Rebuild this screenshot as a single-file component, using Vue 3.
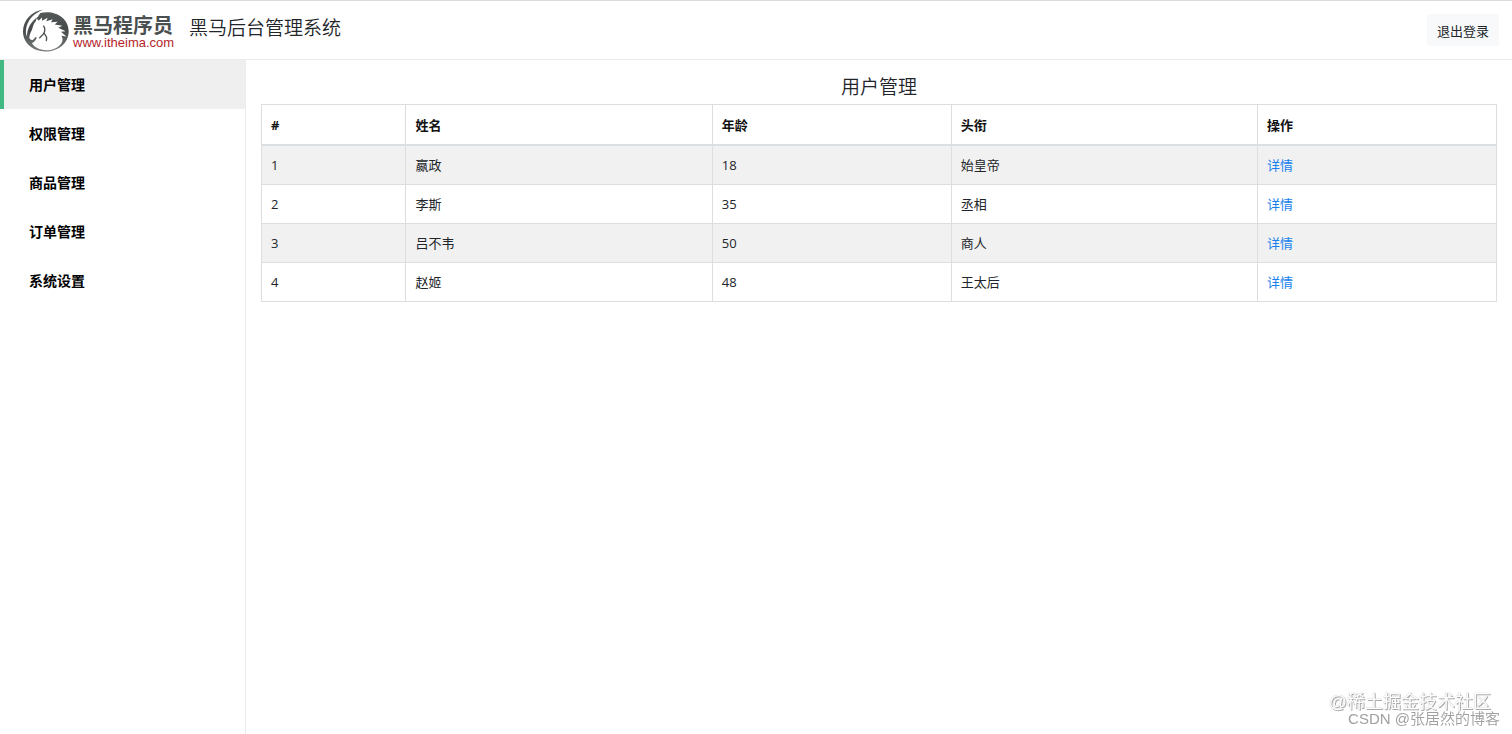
<template>
  <div class="layout">
    <header class="header">
      <a class="logo" href="#" aria-label="黑马程序员">
        <svg class="logo-mark" viewBox="0 0 138 128" aria-hidden="true">
          <defs>
            <linearGradient id="ring" x1="0" y1="0" x2="0" y2="1">
              <stop offset="0" stop-color="#565b5b" />
              <stop offset="0.5" stop-color="#454949" />
              <stop offset="1" stop-color="#7a7e7e" />
            </linearGradient>
          </defs>
          <path fill="url(#ring)" d="M62 1C25 6 0 33 0 68c0 34 30 59 67 59 39 0 70-25 70-61 0-34-30-57-66-57-13 0-25 3-35 9C43 11 52 5 62 1Z" />
          <path fill="#fff" d="M62 2C32 12 12 34 9 62c-1 8 0 14 3 20 0-25 13-46 33-59 3-7 9-15 17-21Z" />
          <path fill="#fff" d="M19 84c1-9 6-17 9-25 2-8 4-16 10-22l3-10 6 8 10-10 0 10 17-9-4 10 19-6-5 9 20-1-9 8 23 4-12 6 22 10-14 2 16 14-15-2c6 9 4 18-2 25-10 12-26 18-43 18-21 0-37-9-44-22 5 1 9-4 12-9l4-7-5-1-8 9c-7-1-10-5-10-9Z" />
          <path fill="none" stroke="#4b5050" stroke-width="4" stroke-linecap="round" stroke-linejoin="round" d="M62 51c5 7 4 14 1 20-3 7-8 9-13 15M63 71c2 6 7 9 8 15l-1 8" />
        </svg>
        <span class="logo-text">
          <strong class="logo-name">黑马程序员</strong>
          <span class="logo-url">www.itheima.com</span>
        </span>
      </a>
      <h1 class="system-title">黑马后台管理系统</h1>
      <button class="logout-btn" type="button">退出登录</button>
    </header>
    <div class="body">
      <nav class="sidebar">
        <a
          v-for="item in menus"
          :key="item"
          href="#"
          :class="['menu-item', { active: item === current }]"
          @click.prevent="current = item"
        >{{ item }}</a>
      </nav>
      <main class="content">
        <h2 class="content-title">{{ current }}</h2>
        <table class="user-table">
          <colgroup>
            <col class="col-id">
            <col class="col-name">
            <col class="col-age">
            <col class="col-name">
            <col class="col-age">
          </colgroup>
          <thead>
            <tr>
              <th>#</th>
              <th>姓名</th>
              <th>年龄</th>
              <th>头衔</th>
              <th>操作</th>
            </tr>
          </thead>
          <tbody>
            <tr v-for="user in users" :key="user.id">
              <td>{{ user.id }}</td>
              <td>{{ user.name }}</td>
              <td>{{ user.age }}</td>
              <td>{{ user.position }}</td>
              <td><a href="#" @click.prevent>详情</a></td>
            </tr>
          </tbody>
        </table>
      </main>
    </div>
    <div class="watermark">
      <span class="watermark-site">@稀土掘金技术社区</span>
      <span class="watermark-author">CSDN @张居然的博客</span>
    </div>
  </div>
</template>

<script setup>
import { ref } from 'vue'

const menus = ['用户管理', '权限管理', '商品管理', '订单管理', '系统设置']
const current = ref('用户管理')

const users = ref([
  { id: 1, name: '嬴政', age: 18, position: '始皇帝' },
  { id: 2, name: '李斯', age: 35, position: '丞相' },
  { id: 3, name: '吕不韦', age: 50, position: '商人' },
  { id: 4, name: '赵姬', age: 48, position: '王太后' },
])
</script>

<style>
body {
  margin: 0;
  background: #fff;
}
</style>

<style scoped>
.layout {
  display: flex;
  flex-direction: column;
  min-height: 100vh;
  box-sizing: border-box;
  border-top: 1px solid #dcdcdc;
  font-family: "Open Sans", "Noto Sans CJK SC", sans-serif;
  font-size: 13px;
  color: #212529;
}
.header {
  display: flex;
  align-items: flex-start;
  height: 58px;
  padding: 0 13px 0 23px;
  border-bottom: 1px solid #ebebeb;
}
.logo {
  display: flex;
  margin-top: 8px;
  text-decoration: none;
}
.logo-mark {
  width: 46px;
  height: 43px;
}
.logo-text {
  display: flex;
  flex-direction: column;
  width: 99px;
  margin: 6px 0 0 4px;
  font-family: "Liberation Sans", "Noto Sans CJK SC", sans-serif;
  white-space: nowrap;
}
.logo-name {
  font-size: 20px;
  line-height: 22px;
  font-weight: bold;
  color: #4a4f4f;
}
.logo-url {
  font-size: 13px;
  line-height: 12px;
  color: #b5262b;
}
.system-title {
  margin: 13px 0 0 17px;
  font-size: 19px;
  line-height: 28px;
  font-weight: 350;
}
.logout-btn {
  margin: 13px 0 0 auto;
  padding: 0 10px;
  height: 32px;
  border: none;
  border-radius: 3px;
  background: #f8f9fa;
  font-family: inherit;
  font-size: 13px;
  color: #212529;
  cursor: pointer;
}
.body {
  display: flex;
  flex: 1;
}
.sidebar {
  width: 245px;
  flex-shrink: 0;
  border-right: 1px solid #ebebeb;
}
.menu-item {
  display: block;
  padding-left: 29px;
  font-size: 14px;
  line-height: 49px;
  font-weight: bold;
  color: #000;
  text-decoration: none;
}
.menu-item.active {
  padding-left: 25px;
  border-left: 4px solid #42b983;
  background: #efefef;
}
.content {
  flex: 1;
  padding: 15px 15px 0;
}
.content-title {
  margin: 0;
  font-size: 19px;
  line-height: 24px;
  font-weight: 350;
  text-align: center;
  padding-bottom: 5px;
}
.user-table {
  width: 100%;
  table-layout: fixed;
  border-collapse: collapse;
  border: 1px solid #dee2e6;
}
.user-table th,
.user-table td {
  padding: 9px;
  border: 1px solid #dcdfe1;
  line-height: 20px;
  text-align: left;
}
.user-table thead th {
  padding: 10px 9px 9px;
  border-bottom-width: 2px;
  color: #111;
}
.user-table tbody tr:nth-child(odd) {
  background: #f1f1f1;
}
.user-table a {
  color: #1681ee;
  text-decoration: none;
}
.col-id {
  width: 11.7%;
}
.col-name {
  width: 24.8%;
}
.col-age {
  width: 19.35%;
}
.watermark {
  position: fixed;
  right: 12px;
  bottom: 7px;
  display: flex;
  flex-direction: column;
  align-items: flex-end;
  font-family: "Liberation Sans", "Noto Sans CJK SC", sans-serif;
  pointer-events: none;
}
.watermark-site {
  margin-right: 9px;
  font-size: 18px;
  line-height: 18px;
  color: #fff;
  text-shadow: 1px 1px 0 #aaa, 0 0 1px #aaa;
}
.watermark-author {
  font-size: 15px;
  line-height: 16px;
  font-weight: 350;
  color: #a0a0a0;
}
</style>
